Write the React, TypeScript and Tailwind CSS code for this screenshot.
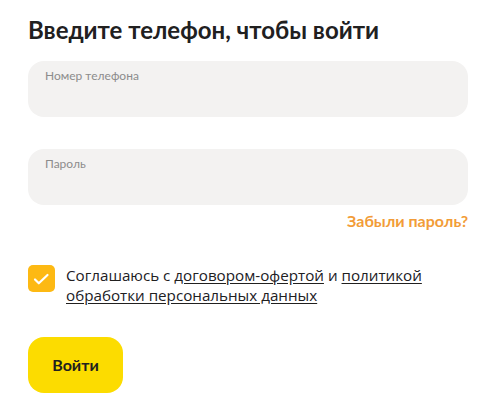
import React from "react";

function Field({ label }: { label: string }) {
  return (
    <div className="h-14 w-full rounded-2xl bg-[#f3f2f1] px-[17px] pt-[1px]">
      <span className="text-[12px] leading-4 text-[#8c8c8c]">{label}</span>
    </div>
  );
}

export default function App() {
  return (
    <div
      className="min-h-[403px] w-[484px] bg-white pl-[28px] pr-[16px] pt-[14px]"
      style={{ fontFamily: "Lato, 'Open Sans', sans-serif" }}
    >
      <h1 className="text-[24px] font-bold leading-8 text-[#21201f]">
        Введите телефон, чтобы войти
      </h1>
      <div className="mt-[15px]">
        <Field label="Номер телефона" />
      </div>
      <div className="mt-[32px]">
        <Field label="Пароль" />
      </div>
      <div className="mt-[6px] flex justify-end">
        <a className="text-[16px] font-bold leading-5 text-[#f29c38]">Забыли пароль?</a>
      </div>
      <div className="mt-[34px] flex items-start gap-[11px]">
        <div className="h-[27px] w-[27px] shrink-0 rounded-[5px] bg-[#fdb913]">
          <svg width="27" height="27" viewBox="0 0 27 27" fill="none">
            <path
              d="M7 14.5l3.8 3.8L19.5 10"
              stroke="white"
              strokeWidth="2.2"
              strokeLinecap="round"
              strokeLinejoin="round"
            />
          </svg>
        </div>
        <p
          className="text-[15.2px] leading-5 text-[#21201f]"
          style={{ fontFamily: "'Open Sans', sans-serif" }}
        >
          Соглашаюсь с <a className="underline underline-offset-2">договором-офертой</a> и{" "}
          <a className="underline underline-offset-2">политикой обработки персональных данных</a>
        </p>
      </div>
      <button className="mt-[32px] h-14 w-[95px] rounded-2xl bg-[#fcdc00] text-[16px] font-bold text-[#21201f]">
        Войти
      </button>
    </div>
  );
}
